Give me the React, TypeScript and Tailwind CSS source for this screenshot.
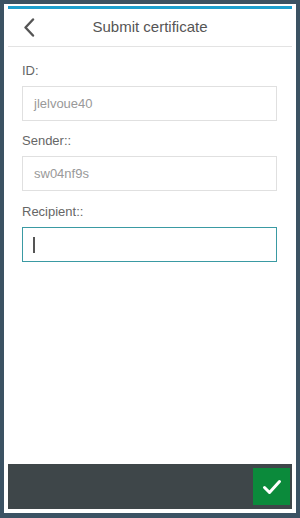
export default function App() {
  const fields = [
    { label: "ID:", value: "jlelvoue40" },
    { label: "Sender::", value: "sw04nf9s" },
  ];

  return (
    <div
      className="w-[300px] h-[518px] bg-[#3b5263] pt-[4px] px-[4px] pb-[5px]"
      style={{ fontFamily: '"Liberation Sans", Arial, sans-serif' }}
    >
      <div className="h-full bg-white pt-[2px] px-[4px] pb-[4px] flex flex-col">
        <div className="h-[3px] bg-[#1c9fcf]" />
        <div className="h-[38px] border-b border-[#e3e3e3] relative flex items-center justify-center">
          <svg
            className="absolute left-[15px] top-[9px]"
            width="12"
            height="19"
            viewBox="0 0 12 19"
            fill="none"
          >
            <polyline
              points="10,1.5 2.5,9.5 10,17.5"
              stroke="#555"
              strokeWidth="2.4"
              strokeLinecap="round"
              strokeLinejoin="round"
            />
          </svg>
          <span className="text-[15px] text-[#555]">Submit certificate</span>
        </div>

        <div className="flex-1 pl-[14px] pr-[15px] pt-[15px] flex flex-col gap-[11px]">
          {fields.map((f) => (
            <div key={f.label} className="flex flex-col gap-[6px]">
              <div className="h-[18px] leading-[18px] text-[13px] text-[#666]">{f.label}</div>
              <div className="h-[35px] border border-[#e0e0e0] flex items-center px-[11px] text-[13px] text-[#999]">
                {f.value}
              </div>
            </div>
          ))}
          <div className="flex flex-col gap-[6px] mt-[1px]">
            <div className="h-[18px] leading-[18px] text-[13px] text-[#666]">Recipient::</div>
            <div className="h-[35px] border border-[#3a9aa3] flex items-center px-[10px]">
              <div className="w-[1.5px] h-[16px] bg-[#555]" />
            </div>
          </div>
        </div>

        <div className="h-[45px] bg-[#3e4649] flex items-center justify-end pr-[2px]">
          <div className="w-[37px] h-[37px] bg-[#0b8a3b] flex items-center justify-center">
            <svg width="20" height="16" viewBox="0 0 20 16" fill="none">
              <polyline
                points="2.5,8.5 7.5,13.5 17.5,2.5"
                stroke="#fff"
                strokeWidth="3"
                strokeLinecap="round"
                strokeLinejoin="round"
              />
            </svg>
          </div>
        </div>
      </div>
    </div>
  );
}
